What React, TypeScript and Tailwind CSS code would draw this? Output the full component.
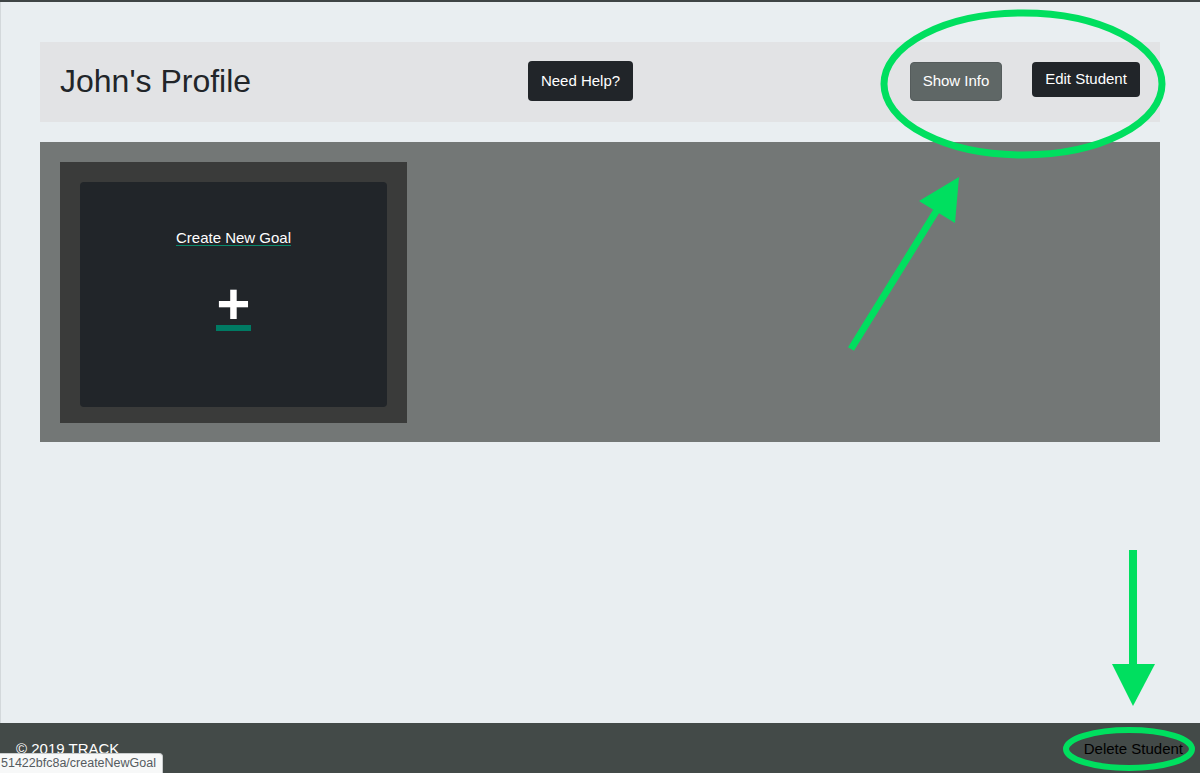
import React from "react";

const green = "#00df5f";

const Annotations = () => (
  <svg
    className="pointer-events-none absolute left-0 top-0"
    width={1200}
    height={773}
    viewBox="0 0 1200 773"
  >
    {/* ring round Show Info / Edit Student */}
    <ellipse cx={1023} cy={82} rx={139} ry={71} fill="none" stroke={green} strokeWidth={7} />
    {/* arrow pointing at the ring */}
    <line x1={851} y1={347} x2={937} y2={208} stroke={green} strokeWidth={7} />
    <polygon points="959,175 919,199 955,221" fill={green} />
    {/* arrow pointing down at Delete Student */}
    <line x1={1133} y1={548} x2={1133} y2={665} stroke={green} strokeWidth={8} />
    <polygon points="1112,662 1155,662 1133,704" fill={green} />
    <ellipse cx={1129} cy={747} rx={63} ry={19} fill="none" stroke={green} strokeWidth={6} />
  </svg>
);

const App = () => {
  return (
    <div className="relative flex h-[773px] w-[1200px] flex-col overflow-hidden border-t-2 border-[#3f4546] bg-[#e9eef1] font-['Liberation_Sans',Arial,sans-serif]">
      <main className="flex-1 border-l border-[#d3d8db] pl-[39px] pr-10 pt-10">
        <div className="flex h-20 items-start bg-[#e2e3e5] pl-5 pr-5">
          <h2 className="mt-[20px] w-[468px] text-[32px] leading-[38px] text-[#212529]">John's Profile</h2>
          <button className="mt-[19px] h-10 w-[105px] rounded bg-[#212529] text-[15px] text-white">
            Need Help?
          </button>
          <div className="flex-1" />
          <button className="mt-5 h-[39px] w-[92px] rounded border border-[#555c5c] bg-[#5f6766] text-[15px] text-white">
            Show Info
          </button>
          <button className="ml-[30px] mt-5 h-[35px] w-[108px] rounded bg-[#212529] text-[15px] text-white">
            Edit Student
          </button>
        </div>

        <div className="mt-5 h-[300px] bg-[#737776] p-5">
          <div className="h-[261px] w-[347px] bg-[#3a3b3a] px-5 pb-4 pt-5">
            <div className="flex h-[225px] flex-col items-center rounded bg-[#212529] pt-[47px]">
              <a className="text-[15px] leading-[18px] text-white underline decoration-[#0a8a6c] underline-offset-2">
                Create New Goal
              </a>
              <a className="mt-[37px] flex flex-col items-center">
                <span className="text-[58px] font-bold leading-[40px] text-white">+</span>
                <span className="mt-[1px] h-[6px] w-[35px] bg-[#007a63]" />
              </a>
            </div>
          </div>
        </div>
      </main>

      <footer className="flex h-[50px] justify-between bg-[#434a48] pl-4 pr-[17px] pt-[17px] text-[15px] leading-[18px]">
        <span className="text-white">© 2019 TRACK</span>
        <a className="text-black">Delete Student</a>
      </footer>

      <div className="absolute bottom-0 left-0 h-5 w-[163px] overflow-hidden rounded-tr border-r border-t border-[#c9cccd] bg-[#f7f8f8] pl-[1px] text-[12.5px] leading-[19px] text-[#555b60] whitespace-nowrap">
        51422bfc8a/createNewGoal
      </div>

      <Annotations />
    </div>
  );
};

export default App;
